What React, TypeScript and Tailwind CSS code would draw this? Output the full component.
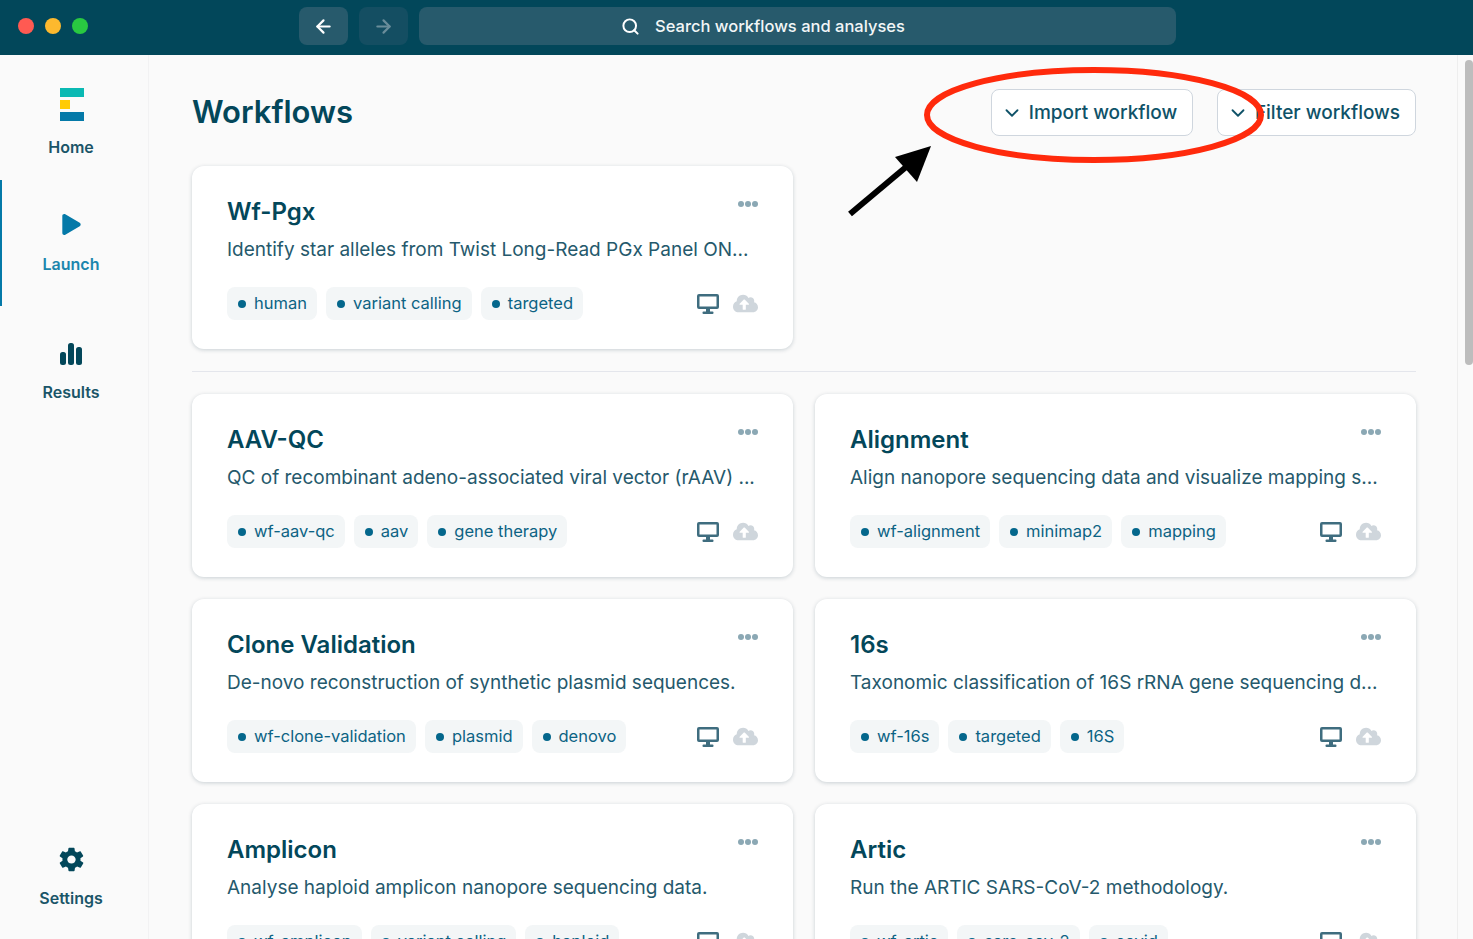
import { ArrowLeft, ArrowRight, ChevronDown, Search } from 'lucide-react';
import { FaCloudUploadAlt, FaPlay } from 'react-icons/fa';
import { IoMdSettings } from 'react-icons/io';

interface Workflow { title: string; desc: string; tags: string[] }

const ROWS: Workflow[] = [
  { title: 'AAV-QC', desc: 'QC of recombinant adeno-associated viral vector (rAAV) ...', tags: ['wf-aav-qc', 'aav', 'gene therapy'] },
  { title: 'Alignment', desc: 'Align nanopore sequencing data and visualize mapping s...', tags: ['wf-alignment', 'minimap2', 'mapping'] },
  { title: 'Clone Validation', desc: 'De-novo reconstruction of synthetic plasmid sequences.', tags: ['wf-clone-validation', 'plasmid', 'denovo'] },
  { title: '16s', desc: 'Taxonomic classification of 16S rRNA gene sequencing d...', tags: ['wf-16s', 'targeted', '16S'] },
  { title: 'Amplicon', desc: 'Analyse haploid amplicon nanopore sequencing data.', tags: ['wf-amplicon', 'variant calling', 'haploid'] },
  { title: 'Artic', desc: 'Run the ARTIC SARS-CoV-2 methodology.', tags: ['wf-artic', 'sars-cov-2', 'covid'] },
];

function Card({ w }: { w: Workflow }) {
  return (
    <div className="relative h-[183px] rounded-xl bg-white px-[35px] pt-[29px] shadow-[0_1px_4px_rgba(0,40,60,0.2)]">
      <div className="absolute right-[35px] top-[35px] flex gap-[1px]">
        <span className="h-[6px] w-[6px] rounded-full bg-[#8ba8b4]" />
        <span className="h-[6px] w-[6px] rounded-full bg-[#8ba8b4]" />
        <span className="h-[6px] w-[6px] rounded-full bg-[#8ba8b4]" />
      </div>
      <h2 className="text-[24px] font-semibold leading-[34px] text-[#03475a]">{w.title}</h2>
      <p className="mt-[7px] whitespace-nowrap text-[19px] leading-[28px] text-[#25596c]">{w.desc}</p>
      <div className="mt-[23px] flex items-center">
        <div className="flex gap-[9px]">
          {w.tags.map((t) => (
            <span key={t} className="flex h-[33px] items-center gap-[8px] rounded-lg bg-[#f3f6f7] pl-[11px] pr-[10px] text-[16.5px] text-[#0c6384]">
              <span className="h-[8px] w-[8px] rounded-full bg-[#04678c]" />
              {t}
            </span>
          ))}
        </div>
        <div className="ml-auto flex items-center gap-[14px]">
          <svg viewBox="0 0 22 20" className="h-[20px] w-[22px]" fill="#3f6d7f">
            <path fillRule="evenodd" d="M2 0h18a2 2 0 0 1 2 2v11a2 2 0 0 1-2 2H2a2 2 0 0 1-2-2V2a2 2 0 0 1 2-2Zm.5 2.5v10h17v-10Z" />
            <rect x="9" y="15" width="4" height="3" />
            <rect x="5.5" y="17.5" width="11" height="2.5" rx="1" />
          </svg>
          <FaCloudUploadAlt className="h-[25px] w-[25px] text-[#cfd6dc]" />
        </div>
      </div>
    </div>
  );
}

export default function App() {
  return (
    <div className="relative flex h-[939px] flex-col overflow-hidden bg-[#fafafa] font-['Inter',sans-serif]">
      <header className="relative flex h-[55px] shrink-0 items-center bg-[#02475a] pb-[3px]">
        <div className="ml-[18px] -mt-[1px] flex gap-[11px]">
          <span className="h-[16px] w-[16px] rounded-full bg-[#ff5a52]" />
          <span className="h-[16px] w-[16px] rounded-full bg-[#fdb92e]" />
          <span className="h-[16px] w-[16px] rounded-full bg-[#29c941]" />
        </div>
        <button className="ml-[211px] flex h-[38px] w-[49px] items-center justify-center rounded-lg bg-[#275a6c] text-white">
          <ArrowLeft className="h-[21px] w-[21px]" strokeWidth={2.5} />
        </button>
        <button className="ml-[11px] flex h-[38px] w-[49px] items-center justify-center rounded-lg bg-[#144e62] text-[#6a8d9a]">
          <ArrowRight className="h-[21px] w-[21px]" strokeWidth={2.5} />
        </button>
        <div className="ml-[11px] flex h-[38px] w-[757px] items-center justify-center gap-[15px] rounded-lg bg-[#275a6c] pr-[69px] text-[16.5px] font-medium text-[#f2f6f7]">
          <Search className="h-[19px] w-[19px] text-white" strokeWidth={2.5} />
          Search workflows and analyses
        </div>
      </header>

      <div className="flex min-h-0 flex-1">
        <nav className="relative flex w-[149px] shrink-0 flex-col items-center border-r border-[#f2f2f3] pr-[6px]">
          <div className="mt-[33px] flex w-full flex-col items-center">
            <svg viewBox="0 0 24 33" className="ml-[1px] h-[33px] w-[24px]">
              <rect x="0" y="0" width="24" height="9" fill="#0ab9b3" />
              <rect x="0" y="12" width="10" height="9" fill="#ffcb05" />
              <rect x="0" y="24" width="24" height="9" fill="#0479a8" />
            </svg>
            <span className="mt-[16px] text-[16px] font-semibold leading-[20px] text-[#1a5568]">Home</span>
          </div>
          <div className="relative mt-[23px] flex h-[126px] w-full flex-col items-center pt-[34px]">
            <span className="absolute left-0 top-0 h-full w-[2px] bg-[#0479a8]" />
            <FaPlay className="h-[21px] w-[21px] text-[#0479a8]" />
            <span className="mt-[19px] text-[16px] font-semibold leading-[20px] text-[#1b86ad]">Launch</span>
          </div>
          <div className="mt-[37px] flex w-full flex-col items-center">
            <svg viewBox="0 0 22 22" className="h-[22px] w-[22px]" fill="#03475a">
              <rect x="0" y="9" width="6" height="13" rx="2.5" />
              <rect x="8" y="0" width="6" height="22" rx="2.5" />
              <rect x="16" y="4" width="6" height="18" rx="2.5" />
            </svg>
            <span className="mt-[17px] text-[16px] font-semibold leading-[20px] text-[#1a5568]">Results</span>
          </div>
          <div className="mt-auto mb-[31px] flex w-full flex-col items-center">
            <IoMdSettings className="mt-[1px] h-[29px] w-[29px] text-[#03475a]" />
            <span className="mt-[14px] text-[16px] font-semibold leading-[20px] text-[#1a5568]">Settings</span>
          </div>
        </nav>

        <main className="min-w-0 flex-1 overflow-hidden pl-[43px] pr-[41px]">
          <div className="flex h-[111px] items-start justify-between pt-[34px]">
            <h1 className="text-[31px] font-semibold leading-[46px] text-[#03475a]">Workflows</h1>
            <div className="flex gap-[24px]">
              <button className="flex h-[47px] w-[202px] items-center justify-center gap-[6px] rounded-lg border border-[#cfd6de] bg-white pr-[6px] pt-[1px] text-[19px] font-medium text-[#0f5268]">
                <ChevronDown className="h-[22px] w-[22px]" strokeWidth={2} />
                Import workflow
              </button>
              <button className="flex h-[47px] w-[199px] items-center justify-center gap-[6px] rounded-lg border border-[#cfd6de] bg-white pr-[6px] pt-[1px] text-[19px] font-medium text-[#0f5268]">
                <ChevronDown className="h-[22px] w-[22px]" strokeWidth={2} />
                Filter workflows
              </button>
            </div>
          </div>
          <div className="w-[601px]">
            <Card w={{ title: 'Wf-Pgx', desc: 'Identify star alleles from Twist Long-Read PGx Panel ON...', tags: ['human', 'variant calling', 'targeted'] }} />
          </div>
          <hr className="my-[22px] border-t border-[#e4e6ec]" />
          <div className="grid grid-cols-2 gap-[22px]">
            {ROWS.map((w) => <Card key={w.title} w={w} />)}
          </div>
        </main>

        <div className="w-[16px] shrink-0 border-l border-[#eeeeee] bg-[#fafafa]">
          <div className="ml-[7px] mt-[5px] h-[305px] w-[8px] rounded-full bg-[#bdbdbd]" />
        </div>
      </div>

      {/* annotation drawn on top of the screenshot */}
      <svg className="pointer-events-none absolute left-0 top-0 h-[939px] w-[1473px]" viewBox="0 0 1473 939" fill="none">
        <ellipse cx="1094" cy="115" rx="167" ry="45" stroke="#ff2a0c" strokeWidth="6" />
        <line x1="850" y1="214" x2="912" y2="162" stroke="#000" strokeWidth="6" />
        <polygon points="931,146 917,182 895,157" fill="#000" />
      </svg>
    </div>
  );
}
